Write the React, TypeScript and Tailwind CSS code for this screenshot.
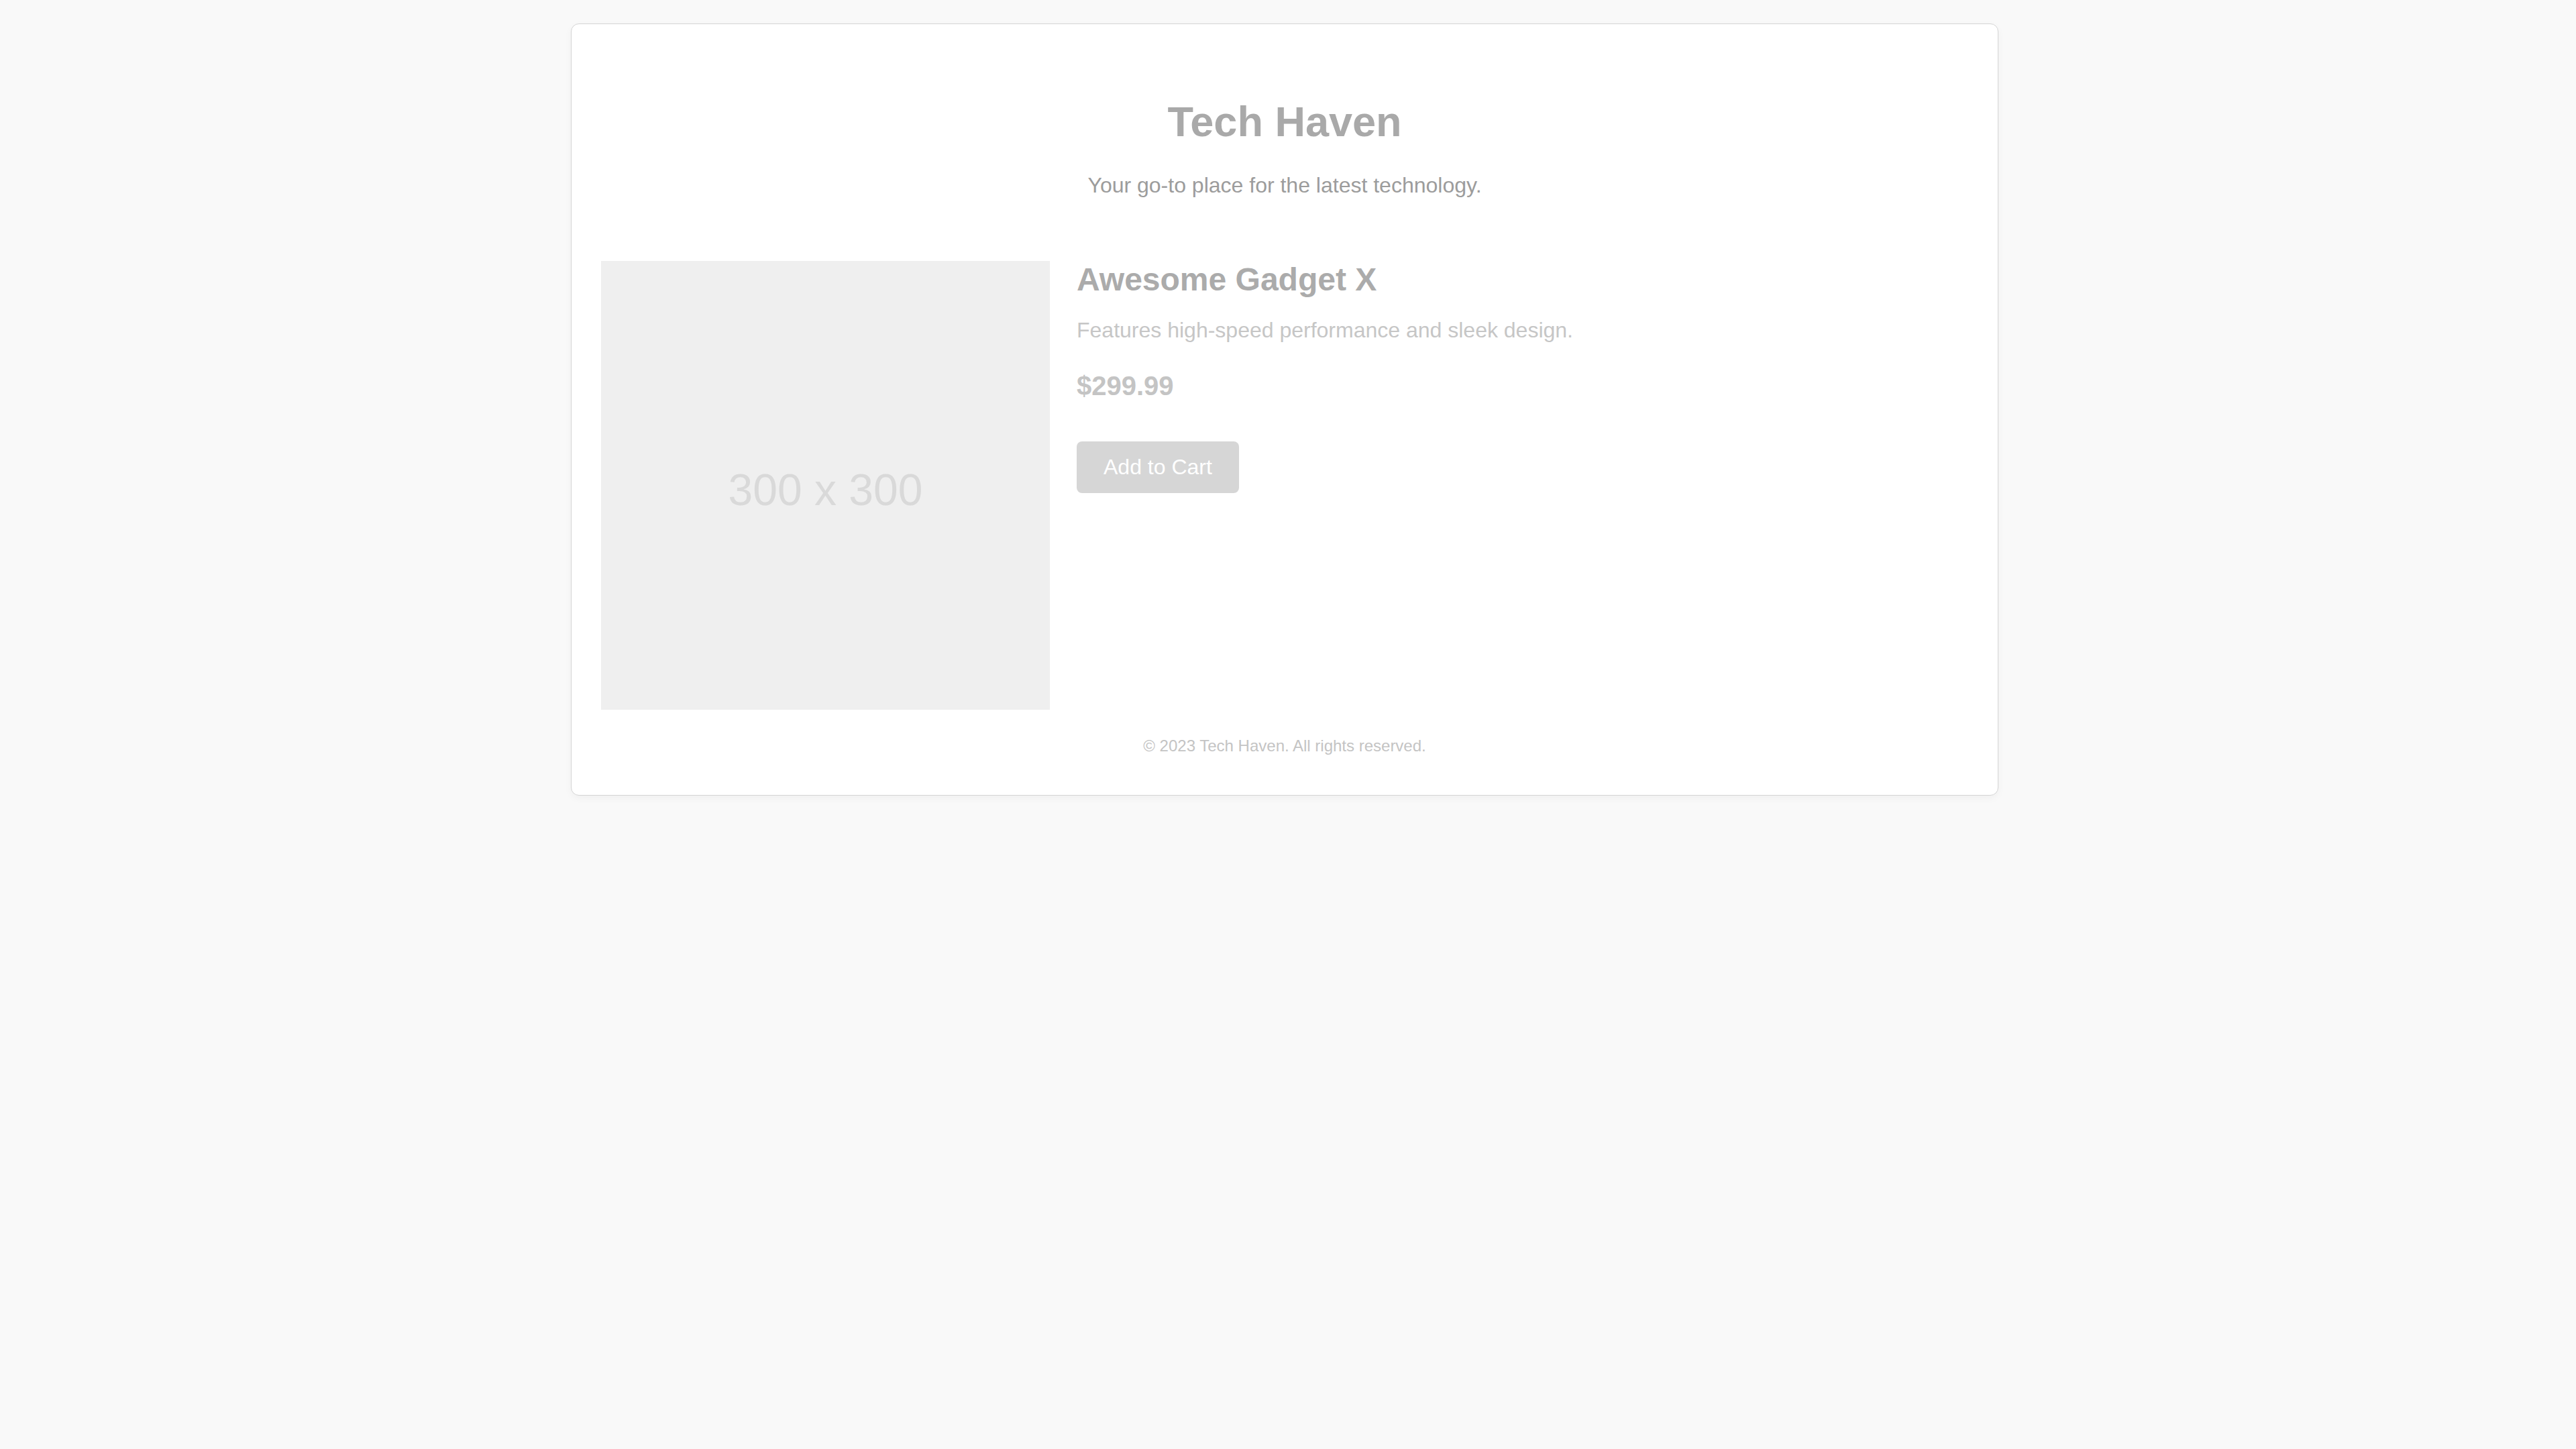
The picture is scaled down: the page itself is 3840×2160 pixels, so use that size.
import React from 'react';

const font = { fontFamily: '"Liberation Sans", Arial, sans-serif' };

const ProductCard: React.FC = () => {
    return (
        <div className="flex items-start gap-[40px]">
            <div className="flex h-[669px] w-[669px] shrink-0 items-center justify-center bg-[#efefef] pt-[14px]">
                <span className="text-[66px] text-[#d9d9d9]">300 x 300</span>
            </div>
            <div className="flex flex-col items-start">
                <h2 className="text-[48px] font-bold leading-[1.15] text-[#ababab]">Awesome Gadget X</h2>
                <p className="mt-[30px] text-[32px] leading-[1.15] text-[#c6c6c6]">
                    Features high-speed performance and sleek design.
                </p>
                <p className="mt-[41px] text-[40px] font-bold leading-[1.15] text-[#c4c4c4]">$299.99</p>
                <button className="mt-[60px] rounded-[8px] bg-[#d6d6d6] px-[40px] py-[20px] text-[32px] leading-[1.15] text-white">
                    Add to Cart
                </button>
            </div>
        </div>
    );
};

const App: React.FC = () => {
    return (
        <div className="min-h-screen bg-[#f9f9f9] pt-[35px] pr-[10px]" style={font}>
            <div className="mx-auto w-[2128px] rounded-[12px] border border-[#d4d4d4] bg-white px-[44px] pt-[44px] pb-[59px] shadow-[0_4px_12px_rgba(0,0,0,0.04)]">
                <header className="flex flex-col items-center pt-[65px]">
                    <h1 className="text-[63px] font-bold leading-[1.15] text-[#a9a9a9]">Tech Haven</h1>
                    <p className="mt-[41px] text-[32px] leading-[1.15] text-[#9c9c9c]">
                        Your go-to place for the latest technology.
                    </p>
                </header>
                <main className="mt-[94px]">
                    <ProductCard />
                </main>
                <footer className="mt-[40px] text-center text-[24px] leading-[1.15] text-[#c4c4c4]">
                    &copy; 2023 Tech Haven. All rights reserved.
                </footer>
            </div>
        </div>
    );
};

export default App;
